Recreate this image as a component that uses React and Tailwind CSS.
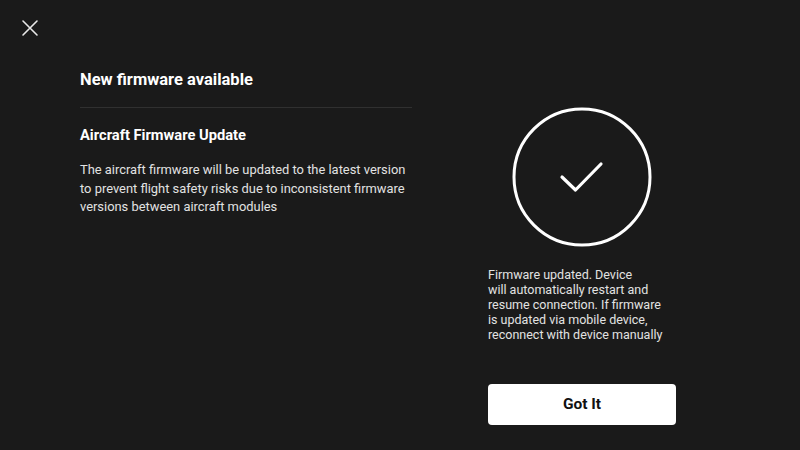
import React from 'react';

const CloseIcon = () => (
  <svg width="20" height="20" viewBox="0 0 20 20" fill="none" stroke="#e8e8e8" strokeWidth="1.6" strokeLinecap="round">
    <path d="M3 3 L17 17 M17 3 L3 17" />
  </svg>
);

const CheckCircle = () => (
  <svg width="140" height="140" viewBox="0 0 140 140" fill="none" stroke="#ffffff">
    <circle cx="70" cy="70" r="68" strokeWidth="3" />
    <path d="M50 70 L63.5 83 L89 57" strokeWidth="3.2" strokeLinecap="round" strokeLinejoin="round" />
  </svg>
);

export default function App() {
  return (
    <div
      className="flex h-[450px] w-full overflow-hidden bg-[#1a1a1a] text-white"
      style={{ fontFamily: 'Roboto, "Liberation Sans", sans-serif' }}
    >
      {/* Colonne gauche */}
      <div className="flex w-[412px] flex-col">
        <button className="ml-[20px] mt-[18px] h-[20px] w-[20px]">
          <CloseIcon />
        </button>
        <div className="ml-[80px] flex w-[332px] flex-col">
          <h1 className="mt-[32px] text-[16.5px] font-bold leading-[20px]">New firmware available</h1>
          <div className="mt-[17px] h-px bg-[#303030]" />
          <h2 className="mt-[17px] text-[14.7px] font-bold leading-[20px]">Aircraft Firmware Update</h2>
          <p className="mt-[16px] w-[330px] text-[12.9px] leading-[18.5px] text-[#e2e2e2]">
            The aircraft firmware will be updated to the latest version to prevent flight safety risks due to inconsistent firmware versions between aircraft modules
          </p>
        </div>
      </div>

      {/* Colonne droite */}
      <div className="ml-[76px] flex w-[188px] flex-col">
        <div className="mt-[107px] flex justify-center">
          <CheckCircle />
        </div>
        <p className="mt-[20px] w-[188px] text-[12.5px] leading-[15px] text-[#e2e2e2]">
          Firmware updated. Device<br />
          will automatically restart and<br />
          resume connection. If firmware<br />
          is updated via mobile device,<br />
          reconnect with device manually
        </p>
        <button className="mt-[42px] h-[41px] w-[188px] rounded-[4px] bg-white text-[15.5px] font-bold text-[#111]">
          Got It
        </button>
      </div>
    </div>
  );
}
